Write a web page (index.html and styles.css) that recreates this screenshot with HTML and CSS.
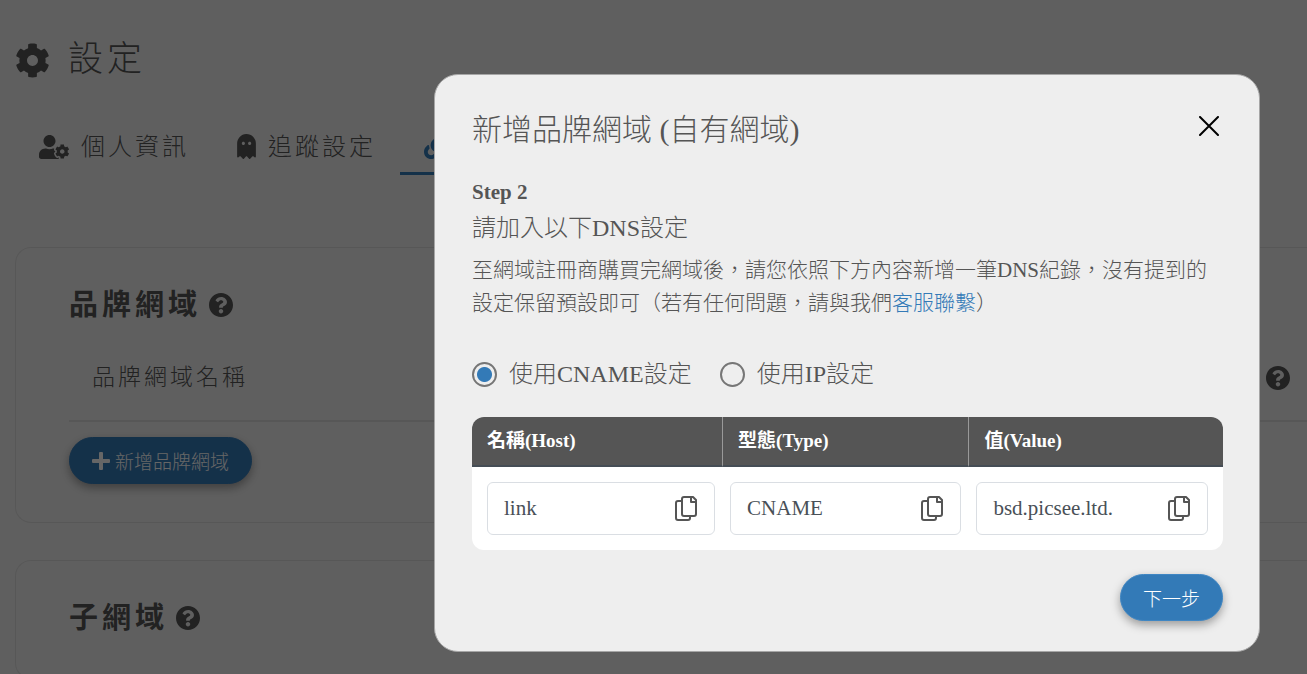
FILE: index.html
```html
<!DOCTYPE html>
<html lang="zh-Hant-TW">
<head>
<meta charset="utf-8">
<meta name="viewport" content="width=device-width, initial-scale=1">
<title>設定</title>
<link rel="stylesheet" href="styles.css">
</head>
<body>
<svg class="defs" aria-hidden="true">
  <symbol id="cog" viewBox="0 0 512 512"><path d="M487.4 315.7l-42.6-24.6c4.3-23.2 4.3-47 0-70.2l42.6-24.6c4.9-2.8 7.1-8.6 5.5-14-11.1-35.6-30-67.8-54.7-94.6-3.8-4.1-10-5.1-14.8-2.3L380.8 110c-17.9-15.4-38.5-27.3-60.8-35.1V25.8c0-5.6-3.9-10.5-9.4-11.7-36.7-8.2-74.3-7.8-109.2 0-5.5 1.2-9.4 6.1-9.4 11.7V75c-22.2 7.9-42.8 19.8-60.8 35.1L88.7 85.5c-4.9-2.8-11-1.9-14.8 2.3-24.7 26.7-43.6 58.9-54.7 94.6-1.7 5.4.6 11.2 5.5 14L67.3 221c-4.3 23.2-4.3 47 0 70.2l-42.6 24.6c-4.9 2.8-7.1 8.6-5.5 14 11.1 35.6 30 67.8 54.7 94.6 3.8 4.1 10 5.1 14.8 2.3l42.6-24.6c17.9 15.4 38.5 27.3 60.8 35.1v49.2c0 5.6 3.9 10.5 9.4 11.7 36.7 8.2 74.3 7.8 109.2 0 5.5-1.2 9.4-6.1 9.4-11.7v-49.2c22.2-7.9 42.8-19.8 60.8-35.1l42.6 24.6c4.9 2.8 11 1.9 14.8-2.3 24.7-26.7 43.6-58.9 54.7-94.6 1.5-5.5-.7-11.3-5.6-14.1zM256 336c-44.1 0-80-35.9-80-80s35.9-80 80-80 80 35.9 80 80-35.9 80-80 80z"/></symbol>
  <symbol id="question" viewBox="8 8 496 496"><path d="M504 256c0 136.997-111.043 248-248 248S8 392.997 8 256C8 119.083 119.043 8 256 8s248 111.083 248 248zM262.655 90c-54.497 0-89.255 22.957-116.549 63.758-3.536 5.286-2.353 12.415 2.715 16.258l34.699 26.31c5.205 3.947 12.621 3.008 16.665-2.122 17.864-22.658 30.113-35.797 57.303-35.797 20.429 0 45.698 13.148 45.698 32.958 0 14.976-12.363 22.667-32.534 33.976C247.128 238.528 216 254.941 216 296v4c0 6.627 5.373 12 12 12h56c6.627 0 12-5.373 12-12v-1.333c0-28.462 83.186-29.647 83.186-106.667 0-58.002-60.165-102-116.531-102zM256 338c-25.365 0-46 20.635-46 46 0 25.364 20.635 46 46 46s46-20.636 46-46c0-25.365-20.635-46-46-46z"/></symbol>
  <symbol id="copy" viewBox="0 0 22 25"><g fill="none" stroke="currentColor" stroke-width="2" stroke-linejoin="round"><path d="M7 5H3Q1 5 1 7v15q0 2 2 2h10q2 0 2-2v-2"/><path d="M9 1h9l3 3v14q0 2-2 2H9q-2 0-2-2V3q0-2 2-2z"/><path d="M16 1v5h5"/></g></symbol>
</svg>

<main class="page">
  <h1 class="page-title"><svg class="icon-cog"><use href="#cog"/></svg>設定</h1>

  <nav class="tabs">
    <a class="tab" href="#profile">
      <svg class="icon-user" viewBox="0 0 640 512"><path d="M610.5 373.3c2.6-14.1 2.6-28.5 0-42.6l25.8-14.9c3-1.7 4.3-5.2 3.3-8.5-6.7-21.6-18.2-41.2-33.2-57.4-2.3-2.5-6-3.1-9-1.4l-25.8 14.9c-10.9-9.3-23.4-16.5-36.9-21.3v-29.8c0-3.4-2.4-6.4-5.7-7.1-22.3-5-45-4.8-66.2 0-3.3.7-5.7 3.7-5.7 7.1v29.8c-13.5 4.8-26 12-36.9 21.3l-25.8-14.9c-2.9-1.7-6.7-1.1-9 1.4-15 16.2-26.5 35.8-33.2 57.4-1 3.3.4 6.8 3.3 8.5l25.8 14.9c-2.6 14.1-2.6 28.5 0 42.6l-25.8 14.9c-3 1.7-4.3 5.2-3.3 8.5 6.7 21.6 18.2 41.1 33.2 57.4 2.3 2.5 6 3.1 9 1.4l25.8-14.9c10.9 9.3 23.4 16.5 36.9 21.3v29.8c0 3.4 2.4 6.4 5.7 7.1 22.3 5 45 4.8 66.2 0 3.3-.7 5.7-3.7 5.7-7.1v-29.8c13.5-4.8 26-12 36.9-21.3l25.8 14.9c2.9 1.7 6.7 1.1 9-1.4 15-16.2 26.5-35.8 33.2-57.4 1-3.3-.4-6.8-3.3-8.5l-25.8-14.9zM496 400.5c-26.8 0-48.5-21.8-48.5-48.5s21.8-48.5 48.5-48.5 48.5 21.8 48.5 48.5-21.7 48.5-48.5 48.5zM224 256c70.7 0 128-57.3 128-128S294.7 0 224 0 96 57.3 96 128s57.3 128 128 128zm201.2 226.5c-2.3-1.2-4.6-2.6-6.8-3.9l-7.9 4.6c-6 3.4-12.8 5.3-19.6 5.3-10.9 0-21.4-4.6-28.9-12.6-18.3-19.8-32.3-43.9-40.2-69.6-5.5-17.7 1.9-36.4 17.9-45.7l7.9-4.6c-.1-2.6-.1-5.2 0-7.8l-7.9-4.6c-16-9.2-23.4-28-17.9-45.7.9-2.9 2.2-5.8 3.2-8.7-3.8-.3-7.5-1.2-11.4-1.2h-16.7c-22.2 10.2-46.9 16-72.9 16s-50.6-5.8-72.9-16h-16.7C60.2 288 0 348.2 0 422.4V464c0 26.5 21.5 48 48 48h352c10.1 0 19.5-3.2 27.2-8.5-1.2-3.8-2-7.7-2-11.8v-9.2z"/></svg>個人資訊</a>
    <a class="tab" href="#tracking">
      <svg class="icon-ghost" viewBox="0 0 384 512"><path d="M186.1.09C81.01 3.24 0 94.92 0 200.05v263.92c0 14.26 17.23 21.39 27.31 11.31l24.92-18.53c6.66-4.95 16-3.99 21.51 2.21l42.95 48.35c6.25 6.25 16.38 6.25 22.63 0l40.72-45.85c6.37-7.17 17.56-7.17 23.92 0l40.72 45.85c6.25 6.25 16.38 6.25 22.63 0l42.95-48.35c5.51-6.2 14.85-7.17 21.51-2.21l24.92 18.53c10.08 10.08 27.31 2.94 27.31-11.31V192C384 84 294.83-3.17 186.1.09zM128 224c-17.67 0-32-14.33-32-32s14.33-32 32-32 32 14.33 32 32-14.33 32-32 32zm128 0c-17.67 0-32-14.33-32-32s14.33-32 32-32 32 14.33 32 32-14.33 32-32 32z"/></svg>追蹤設定</a>
    <a class="tab tab-active" href="#domain">
      <svg class="icon-link" viewBox="0 0 512 512"><path d="M326.612 185.391c59.747 59.809 58.927 155.698.36 214.59-.11.12-.24.25-.36.37l-67.2 67.2c-59.27 59.27-155.699 59.262-214.96 0-59.27-59.26-59.27-155.7 0-214.96l37.106-37.106c9.84-9.84 26.786-3.3 27.294 10.606.648 17.722 3.826 35.527 9.69 52.721 1.986 5.822.567 12.262-3.783 16.612l-13.087 13.087c-28.026 28.026-28.905 73.66-1.155 101.96 28.024 28.579 74.086 28.749 102.325.51l67.2-67.19c28.191-28.191 28.073-73.757 0-101.83-3.701-3.694-7.429-6.564-10.341-8.569a16.037 16.037 0 0 1-6.947-12.606c-.396-10.567 3.348-21.456 11.698-29.806l21.054-21.055c5.521-5.521 14.182-6.199 20.584-1.731a152.482 152.482 0 0 1 20.522 17.197zM467.547 44.449c-59.261-59.262-155.69-59.27-214.96 0l-67.2 67.2c-.12.12-.25.25-.36.37-58.566 58.892-59.387 154.781.36 214.59a152.454 152.454 0 0 0 20.521 17.196c6.402 4.468 15.064 3.789 20.584-1.731l21.054-21.055c8.35-8.35 12.094-19.239 11.698-29.806a16.037 16.037 0 0 0-6.947-12.606c-2.912-2.005-6.64-4.875-10.341-8.569-28.073-28.073-28.191-73.639 0-101.83l67.2-67.19c28.239-28.239 74.3-28.069 102.325.51 27.75 28.3 26.872 73.934-1.155 101.96l-13.087 13.087c-4.35 4.35-5.769 10.79-3.783 16.612 5.864 17.194 9.042 34.999 9.69 52.721.509 13.906 17.454 20.446 27.294 10.606l37.106-37.106c59.271-59.259 59.271-155.699.001-214.959z"/></svg></a>
  </nav>

  <section class="card">
    <h2 class="card-title">品牌網域<svg class="icon-help"><use href="#question"/></svg></h2>
    <div class="list-head"><span>品牌網域名稱</span><svg class="icon-help"><use href="#question"/></svg></div>
    <button class="btn btn-add" type="button"><svg class="icon-plus" viewBox="0 0 18 18"><path d="M7 1q0-1 1-1h2q1 0 1 1v6h6q1 0 1 1v2q0 1-1 1h-6v6q0 1-1 1H8q-1 0-1-1v-6H1q-1 0-1-1V8q0-1 1-1h6z"/></svg>新增品牌網域</button>
  </section>

  <section class="card">
    <h2 class="card-title">子網域<svg class="icon-help"><use href="#question"/></svg></h2>
  </section>
</main>

<div class="backdrop">
  <div class="modal" role="dialog" aria-modal="true" aria-labelledby="modal-title">
    <header class="modal-head">
      <h2 class="modal-title" id="modal-title">新增品牌網域 (自有網域)</h2>
      <button class="close" type="button"><svg class="icon-close" viewBox="0 0 20 20"><path d="M1 1l18 18M19 1L1 19"/></svg></button>
    </header>
    <p class="step">Step 2</p>
    <h3 class="subtitle">請加入以下DNS設定</h3>
    <p class="desc">至網域註冊商購買完網域後，請您依照下方內容新增一筆DNS紀錄，沒有提到的設定保留預設即可（若有任何問題，請與我們<a class="link" href="#support">客服聯繫</a>）</p>

    <div class="options">
      <label class="option"><input class="radio" type="radio" name="mode" checked>使用CNAME設定</label>
      <label class="option"><input class="radio" type="radio" name="mode">使用IP設定</label>
    </div>

    <table class="records">
      <colgroup><col class="col-host"><col class="col-type"><col class="col-value"></colgroup>
      <thead>
        <tr><th id="host">名稱(Host)</th><th id="type">型態(Type)</th><th id="value">值(Value)</th></tr>
      </thead>
      <tbody>
        <tr>
          <td><div class="field"><input class="field-input" type="text" value="link" aria-labelledby="host" readonly><button class="copy" type="button"><svg class="icon-copy"><use href="#copy"/></svg></button></div></td>
          <td><div class="field"><input class="field-input" type="text" value="CNAME" aria-labelledby="type" readonly><button class="copy" type="button"><svg class="icon-copy"><use href="#copy"/></svg></button></div></td>
          <td><div class="field"><input class="field-input" type="text" value="bsd.picsee.ltd." aria-labelledby="value" readonly><button class="copy" type="button"><svg class="icon-copy"><use href="#copy"/></svg></button></div></td>
        </tr>
      </tbody>
    </table>

    <footer class="modal-foot"><button class="btn" type="button">下一步</button></footer>
  </div>
</div>
</body>
</html>
```
FILE: styles.css
```css
* { box-sizing: border-box; }

html, body { height: 100%; }

body {
  margin: 0;
  overflow: hidden;
  background: #eee;
  color: #555;
  font-family: "Liberation Serif", "Noto Sans CJK TC", serif;
  font-weight: 300;
}

h1, h2, h3, p { margin: 0; font-weight: inherit; }

button, input { font: inherit; }

svg { flex: none; fill: currentColor; }

.defs { display: none; }

.page {
  padding: 36px 0 0 15px;
  letter-spacing: 3px;
}

.page-title {
  display: flex;
  align-items: center;
  gap: 18px;
  font-size: 35px;
  line-height: 48px;
  letter-spacing: 4px;
}

.icon-cog { width: 35px; height: 35px; }

.tabs { display: flex; margin-top: 37px; }

.tab {
  display: flex;
  align-items: center;
  gap: 12px;
  height: 54px;
  padding: 0 24px;
  border-bottom: 3px solid transparent;
  color: inherit;
  font-size: 24px;
  line-height: 36px;
  text-decoration: none;
}

.tab-active { border-bottom-color: #337ab7; color: #337ab7; }

.icon-user { width: 30px; height: 24px; }
.icon-ghost { width: 19px; height: 25px; }
.icon-link { width: 24px; height: 24px; }

.card {
  margin-top: 72px;
  padding: 35px 0 38px 53px;
  border: 1px solid #dadada;
  border-right: 0;
  border-radius: 16px 0 0 16px;
}

.card + .card { margin-top: 37px; }

.card-title {
  display: flex;
  align-items: center;
  gap: 8px;
  font-size: 29px;
  font-weight: 700;
  line-height: 44px;
  letter-spacing: 4px;
}

.icon-help { width: 24px; height: 24px; }

.list-head {
  display: flex;
  align-items: center;
  justify-content: space-between;
  margin: 9px 0 15px;
  padding: 24px 17px 24px 23px;
  border-bottom: 2px solid #dadada;
  font-size: 23px;
  line-height: 36px;
}

.btn {
  display: inline-flex;
  align-items: center;
  gap: 5px;
  height: 47px;
  padding: 0 22px;
  border: 1px solid #3f86c3;
  border-radius: 24px;
  background: #337ab7;
  box-shadow: 0 4px 10px rgba(0, 0, 0, .35);
  color: #fff;
  font-size: 19px;
}

.btn-add { border-color: #337ab7; letter-spacing: 0; }

.icon-plus { width: 18px; height: 18px; }

.backdrop {
  position: fixed;
  inset: 0;
  display: flex;
  align-items: flex-start;
  padding: 74px 47px 0 434px;
  background: rgba(0, 0, 0, .6);
}

.modal {
  flex: 1;
  min-width: 0;
  padding: 35px 36px 30px 37px;
  border: 1px solid #a6a6a6;
  border-radius: 24px;
  background: #eee;
}

.modal-head { display: flex; justify-content: space-between; }

.modal-title { font-size: 30px; line-height: 40px; }

.close {
  height: 32px;
  padding: 0 4px;
  border: 0;
  background: none;
  color: #000;
}

.icon-close {
  display: block;
  width: 20px;
  height: 20px;
  stroke: currentColor;
  stroke-width: 2;
  stroke-linecap: round;
}

.step {
  margin-top: 27px;
  font-size: 21px;
  font-weight: 700;
  line-height: 30px;
}

.subtitle { margin-top: 3px; font-size: 24px; line-height: 36px; }

.desc { margin-top: 8px; font-size: 21px; line-height: 33px; }

.link { color: #337ab7; text-decoration: none; }

.options { display: flex; gap: 28px; margin-top: 36px; }

.option {
  display: flex;
  align-items: center;
  gap: 12px;
  font-size: 24px;
  line-height: 36px;
}

.radio {
  appearance: none;
  width: 25px;
  height: 25px;
  margin: 0;
  border: 2px solid #767676;
  border-radius: 50%;
}

.radio:checked { background: radial-gradient(circle, #337ab7 7px, #eee 8px); }

.records {
  width: 100%;
  margin-top: 25px;
  border-spacing: 0;
  border-radius: 12px;
  overflow: hidden;
  table-layout: fixed;
  background: #fff;
}

.col-host { width: 33.3%; }
.col-type { width: 32.8%; }
.col-value { width: 33.9%; }

.records th {
  height: 50px;
  padding: 0 15px;
  border-bottom: 2px solid #454d55;
  background: #555;
  color: #fff;
  font-size: 19px;
  font-weight: 700;
  line-height: 28px;
  text-align: left;
}

.records th + th { border-left: 1px solid #999; }

.records td { padding: 15px 7px 15px 8px; }
.records td:first-child { padding-left: 15px; }
.records td:last-child { padding-right: 15px; }

.field {
  display: flex;
  align-items: center;
  height: 53px;
  padding: 0 17px 0 16px;
  border: 1px solid #dadee3;
  border-radius: 6px;
}

.field-input {
  flex: 1;
  min-width: 0;
  padding: 0;
  border: 0;
  outline: 0;
  background: none;
  color: #495057;
  font-size: 21px;
}

.copy { padding: 0; border: 0; background: none; color: #555; }

.icon-copy { display: block; width: 22px; height: 25px; }

.modal-foot { display: flex; justify-content: flex-end; margin-top: 24px; }
```
